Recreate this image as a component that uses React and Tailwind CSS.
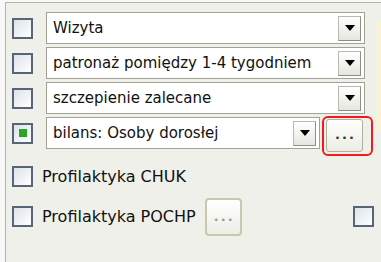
import React from "react";

function Check({ checked }) {
  return (
    <div className="w-[21px] h-[21px] shrink-0 border-2 border-[#5a6479] bg-gradient-to-br from-[#dce3ea] to-[#ffffff] flex items-center justify-center">
      {checked && <div className="w-[8px] h-[8px] bg-[#2aa52a]" />}
    </div>
  );
}

function Arrow() {
  return (
    <div className="w-[23px] h-[25px] shrink-0 border border-[#b9b9b0] border-r-[#8e8e86] border-b-[#8e8e86] bg-gradient-to-b from-[#ffffff] to-[#e6e6e0] flex items-center justify-center">
      <svg width="10" height="6" viewBox="0 0 10 6">
        <polygon points="0,0 10,0 5,6" fill="#000" />
      </svg>
    </div>
  );
}

function Select({ text, w }) {
  return (
    <div className={`${w} h-[32px] shrink-0 border border-[#a2a294] bg-white flex items-center pl-[6px] pr-[3px]`}>
      <span className="flex-1 text-[15px] text-[#111] whitespace-nowrap overflow-hidden">{text}</span>
      <Arrow />
    </div>
  );
}

export default function App() {
  return (
    <div
      className="w-[381px] h-[262px] bg-[#f8f8f6] overflow-hidden relative"
      style={{ fontFamily: '"DejaVu Sans", Verdana, sans-serif' }}
    >
      <div className="mt-[2px] ml-[5px] h-[260px] border-t border-l border-[#b4b4ac] bg-[#f0f0ea] flex flex-col pt-[9px]">
        <div className="flex flex-col gap-[3px]">
          <div className="flex items-center h-[32px] pl-[6px]">
            <Check />
            <div className="w-[13px]" />
            <Select text="Wizyta" w="w-[319px]" />
          </div>
          <div className="flex items-center h-[32px] pl-[6px]">
            <Check />
            <div className="w-[13px]" />
            <Select text="patronaż pomiędzy 1-4 tygodniem" w="w-[319px]" />
          </div>
          <div className="flex items-center h-[32px] pl-[6px]">
            <Check />
            <div className="w-[13px]" />
            <Select text="szczepienie zalecane" w="w-[319px]" />
          </div>
          <div className="flex items-center h-[32px] pl-[6px]">
            <Check checked />
            <div className="w-[13px]" />
            <Select text="bilans: Osoby dorosłej" w="w-[274px]" />
            <div className="relative ml-[6px] mt-[4px]">
              <div className="w-[37px] h-[33px] border border-[#b0b09c] rounded-[3px] bg-gradient-to-b from-[#ffffff] to-[#ececE4] flex items-center justify-center pl-[2px] text-[13px] font-bold text-[#333] tracking-[2px]">
                ...
              </div>
              <div className="absolute -left-[4px] -top-[3px] w-[51px] h-[40px] border-2 border-[#ee1c1c] rounded-[6px]" />
            </div>
          </div>
        </div>
        <div className="flex items-center pl-[6px] mt-[17px] h-[21px]">
          <Check />
          <span className="ml-[9px] text-[16px] text-[#111]">Profilaktyka CHUK</span>
        </div>
        <div className="flex items-center pl-[6px] mt-[19px] h-[21px]">
          <Check />
          <span className="ml-[9px] text-[16px] text-[#111]">Profilaktyka POCHP</span>
          <div className="ml-[9px] w-[37px] h-[38px] border-2 border-[#c8c8ae] rounded-[4px] bg-gradient-to-b from-[#ffffff] to-[#eeeee6] flex items-center justify-center pl-[2px] text-[13px] font-bold text-[#999] tracking-[2px]">
            ...
          </div>
          <div className="flex-1" />
          <div className="mr-[7px]">
            <Check />
          </div>
        </div>
      </div>
      <div className="absolute right-0 top-[20px] w-[4px] h-[112px] bg-[#fbf3cf]" />
    </div>
  );
}
